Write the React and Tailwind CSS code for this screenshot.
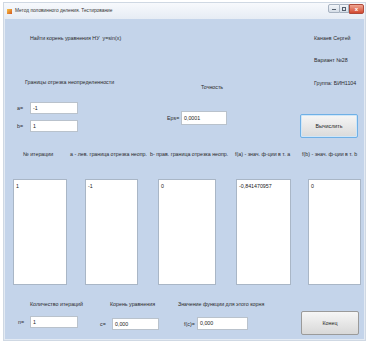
export default function App() {
  const lbl = "whitespace-nowrap text-[5.3px] leading-[8px] text-[#2a2a2a]"
  const input =
    "h-[12px] border border-[#b9c2cc] bg-white pl-[2px] text-[5.3px] leading-[10px] text-[#222]"
  const listBox = "h-[106px] border border-[#a9b6c6] bg-white pl-[2px] pt-[2px] text-[5.3px] leading-[8px] text-[#222]"

  return (
    <div
      className="h-[346px] w-[368px] bg-white pl-[3px] pt-[2px]"
      style={{ fontFamily: "'Liberation Sans', Arial, sans-serif" }}
    >
      <div className="flex h-[339px] w-[363px] flex-col border border-[#cfd8e3] bg-[#e3eaf3]">
        {/* title bar */}
        <div className="flex h-[16px] items-center bg-gradient-to-b from-[#f7f9fc] to-[#e6ecf4]">
          <div className="ml-[3px] h-[5px] w-[5px] bg-gradient-to-br from-[#f6c343] to-[#d2561f]" />
          <span className="ml-[3px] whitespace-nowrap text-[4.8px] leading-[6px] text-[#333]">
            Метод половинного деления. Тестирование
          </span>
          <div className="ml-auto mr-[1px] flex items-start self-start pt-[1px]">
            <div className="flex h-[9px] items-end justify-center rounded-l-[2px] border border-[#a7b2c0] bg-gradient-to-b from-[#f3f6f9] to-[#d6dee8] px-[3px] pb-[2px]">
              <div className="h-[1px] w-[4px] bg-[#56606e]" />
            </div>
            <div className="flex h-[9px] items-center justify-center border border-l-0 border-[#a7b2c0] bg-gradient-to-b from-[#f3f6f9] to-[#d6dee8] px-[2px]">
              <div className="h-[4px] w-[4px] border border-[#56606e]" />
            </div>
            <div className="flex h-[10px] w-[15px] items-center justify-center rounded-r-[2px] border border-[#b04a3a] bg-gradient-to-b from-[#eea592] to-[#d2472f] text-[6px] font-bold leading-[6px] text-white">
              x
            </div>
          </div>
        </div>

        {/* body */}
        <div className="mx-[1px] mb-[1px] flex flex-1 flex-col bg-[#c4d4ea]">
          {/* top section */}
          <div className="flex h-[127px]">
            <div className="w-[295px]">
              <p className={`${lbl} ml-[25px] mt-[15px]`}>Найти корень уравнения НУ&nbsp;&nbsp;y=sin(x)</p>
              <div className="mt-[36px] flex">
                <p className={`${lbl} w-[196px] pl-[20px]`}>Границы отрезка неопределенности</p>
                <p className={`${lbl} mt-[5px]`}>Точность</p>
              </div>
              <div className="mt-[11px] flex">
                <div className="flex w-[162px] flex-col gap-[6px]">
                  <div className="flex items-center">
                    <span className={`${lbl} w-[25px] pl-[12px]`}>a=</span>
                    <div className={`${input} w-[48px]`}>-1</div>
                  </div>
                  <div className="flex items-center">
                    <span className={`${lbl} w-[25px] pl-[12px]`}>b=</span>
                    <div className={`${input} w-[48px]`}>1</div>
                  </div>
                </div>
                <div className="mt-[9px] flex items-center self-start">
                  <span className={`${lbl} w-[14px]`}>Eps=</span>
                  <div className={`${input} h-[14px] w-[46px] leading-[12px]`}>0,0001</div>
                </div>
              </div>
            </div>
            <div className="w-[60px]">
              <p className={`${lbl} ml-[14px] mt-[15px]`}>Канаев Сергей</p>
              <p className={`${lbl} ml-[14px] mt-[14px]`}>Вариант №28</p>
              <p className={`${lbl} ml-[14px] mt-[15px]`}>Группа: БИН1104</p>
              <button className="mt-[27px] h-[24px] w-[58px] rounded-[2px] border border-[#6fb0e6] bg-gradient-to-b from-[#f6f6f6] to-[#dadada] text-[5.3px] leading-[8px] text-[#222] shadow-[inset_0_0_0_1px_#cfe6f8]">
                Вычислить
              </button>
            </div>
          </div>

          {/* column headers */}
          <div className="flex h-[33px] pt-[4px]">
            <p className={`${lbl} w-[65px] pl-[18px]`}>№ итерации</p>
            <p className={`${lbl} w-[80px]`}>a - лев. граница отрезка неопр.</p>
            <p className={`${lbl} w-[85px]`}>b- прав. граница отрезка неопр.</p>
            <p className={`${lbl} w-[67px]`}>f(a) - знач. ф-ции в т. a</p>
            <p className={lbl}>f(b) - знач. ф-ции в т. b</p>
          </div>

          {/* list boxes */}
          <div className="flex">
            <div className={`${listBox} ml-[8px] w-[54px]`}>1</div>
            <div className={`${listBox} ml-[18px] w-[53px]`}>-1</div>
            <div className={`${listBox} ml-[20px] w-[58px]`}>0</div>
            <div className={`${listBox} ml-[20px] w-[55px]`}>-0,841470957</div>
            <div className={`${listBox} ml-[17px] w-[53px]`}>0</div>
          </div>

          {/* bottom section */}
          <div className="flex">
            <div className="w-[296px]">
              <div className="mt-[15px] flex">
                <p className={`${lbl} w-[105px] pl-[25px]`}>Количество итераций</p>
                <p className={`${lbl} w-[68px]`}>Корень уравнения</p>
                <p className={lbl}>Значение функции для этого корня</p>
              </div>
              <div className="mt-[8px] flex items-start">
                <div className="flex items-center">
                  <span className={`${lbl} w-[25px] pl-[13px]`}>n=</span>
                  <div className={`${input} w-[48px]`}>1</div>
                </div>
                <div className="ml-[22px] mt-[2px] flex items-center">
                  <span className={`${lbl} w-[12px]`}>c=</span>
                  <div className={`${input} w-[47px]`}>0,000</div>
                </div>
                <div className="ml-[25px] mt-[1px] flex items-center">
                  <span className={`${lbl} w-[13px]`}>f(c)=</span>
                  <div className={`${input} h-[13px] w-[51px]`}>0,000</div>
                </div>
              </div>
            </div>
            <button className="mt-[26px] h-[24px] w-[58px] rounded-[2px] border border-[#9a9a9a] bg-gradient-to-b from-[#f6f6f6] to-[#d8d8d8] text-[5.3px] leading-[8px] text-[#222]">
              Конец
            </button>
          </div>
        </div>
      </div>
    </div>
  )
}
